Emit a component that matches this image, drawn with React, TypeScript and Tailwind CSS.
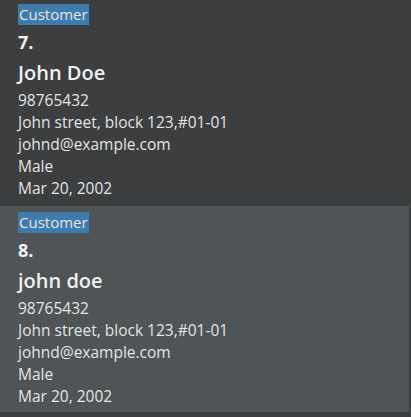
export default function App() {
  const people = [
    { idx: "7.", name: "John Doe", bg: "bg-[#3c3e3f]", pt: "pt-[4px]" },
    { idx: "8.", name: "john doe", bg: "bg-[#4f5456]", pt: "pt-[6px]" },
  ];
  const line = "text-[15.5px] leading-[22px] text-[#e4e4e4] whitespace-nowrap";
  return (
    <div className="w-[411px] h-[417px] bg-[#3c3e3f] flex flex-col" style={{ fontFamily: '"Open Sans", "Noto Sans", sans-serif' }}>
      {people.map((p, i) => (
        <div key={i} className={`w-[409px] h-[206px] ${p.bg} ${p.pt} pl-[18px] flex flex-col text-[#e0e0e0]`}>
          <div className="flex">
            <span className="bg-[#3f7bad] text-[#e6e6e6] text-[15px] leading-[21px] px-[1px]">Customer</span>
          </div>
          <div className="text-[18px] font-bold leading-[28px] mt-[3px] text-[#f0f0f0]">{p.idx}</div>
          <div className="text-[20px] font-semibold leading-[33px] text-[#f0f0f0]">{p.name}</div>
          <div className={line}>98765432</div>
          <div className={line}>John street, block 123,#01-01</div>
          <div className={line}>johnd@example.com</div>
          <div className={line}>Male</div>
          <div className={line}>Mar 20, 2002</div>
        </div>
      ))}
    </div>
  );
}
